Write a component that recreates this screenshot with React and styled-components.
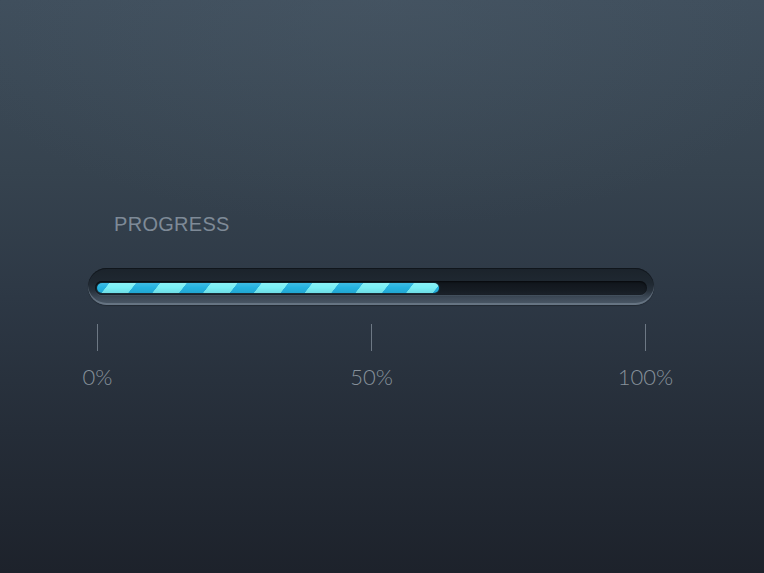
import React from "react";
import styled, { createGlobalStyle } from "styled-components";

const Global = createGlobalStyle`
  html, body { margin: 0; padding: 0; }
  body { background: #1c212a; }
`;

const Page = styled.div`
  width: 764px;
  height: 573px;
  box-sizing: border-box;
  padding: 213px 0 0 88px;
  background:
    radial-gradient(ellipse 60% 40% at 50% 0%, rgba(80, 96, 110, 0.3), rgba(80, 96, 110, 0) 100%),
    linear-gradient(180deg, #3f4e5c 0%, #36434f 30%, #2d3845 52%, #252d38 75%, #1d222b 100%);
  display: flex;
  flex-direction: column;
  overflow: hidden;
`;

const Widget = styled.div`
  width: 566px;
  display: flex;
  flex-direction: column;
`;

const Title = styled.div`
  margin-left: 26px;
  font-family: "Liberation Sans", Arial, sans-serif;
  font-size: 20px;
  line-height: 23px;
  color: #7e8a97;
  letter-spacing: 0.3px;
`;

const Shell = styled.div`
  margin-top: 32px;
  height: 37px;
  box-sizing: border-box;
  padding: 13px 7px 10px 7px;
  border-radius: 19px;
  background: linear-gradient(180deg, #1b232b 0%, #1f2831 40%, #28323d 62%, #3d4957 80%, #4c5a68 100%);
  box-shadow:
    inset 0 -2px 0 rgba(125, 140, 155, 0.55),
    inset 0 1px 0 rgba(10, 14, 18, 0.6),
    0 1px 1px rgba(0, 0, 0, 0.25);
`;

const Track = styled.div`
  height: 14px;
  box-sizing: border-box;
  padding: 2px;
  border-radius: 7px;
  background: linear-gradient(180deg, #10151b 0%, #151b22 60%, #1b222a 100%);
  box-shadow: inset 0 1px 2px rgba(0, 0, 0, 0.6), 0 1px 0 rgba(90, 104, 118, 0.35);
`;

const Fill = styled.div`
  height: 10px;
  border-radius: 5px;
  background:
    linear-gradient(180deg, rgba(255, 255, 255, 0.12) 0%, rgba(255, 255, 255, 0) 45%, rgba(0, 50, 80, 0.1) 100%),
    repeating-linear-gradient(
      128deg,
      #25b3e0 0px,
      #25b3e0 9.5px,
      #7af0f6 10px,
      #7af0f6 30.5px,
      #25b3e0 31px,
      #25b3e0 40px
    );
  box-shadow: 0 0 2px rgba(60, 200, 235, 0.35);
`;

const Scale = styled.div`
  margin-left: 9px;
  width: 549px;
  margin-top: 19px;
  display: flex;
  justify-content: space-between;
`;

const Mark = styled.div`
  width: 1px;
  display: flex;
  flex-direction: column;
  align-items: center;
`;

const Tick = styled.div`
  width: 1px;
  height: 27px;
  background: #6d7884;
`;

const Label = styled.div`
  margin-top: 13px;
  font-family: Lato, "Open Sans", sans-serif;
  font-weight: 300;
  font-size: 22px;
  line-height: 26px;
  color: #87919b;
  white-space: nowrap;
`;

const progress = 62.4;
const marks = ["0%", "50%", "100%"];

export default function App() {
  return (
    <>
      <Global />
      <Page>
        <Widget>
          <Title>PROGRESS</Title>
          <Shell>
            <Track>
              <Fill style={{ width: `${progress}%` }} />
            </Track>
          </Shell>
          <Scale>
            {marks.map((m) => (
              <Mark key={m}>
                <Tick />
                <Label>{m}</Label>
              </Mark>
            ))}
          </Scale>
        </Widget>
      </Page>
    </>
  );
}
